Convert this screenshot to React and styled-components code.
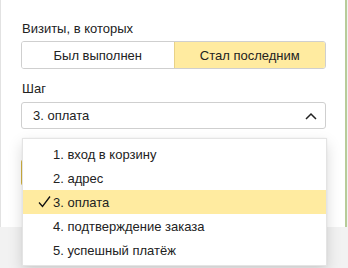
import React from "react";
import styled, { createGlobalStyle } from "styled-components";

const Global = createGlobalStyle`
  html, body { margin: 0; padding: 0; }
  body {
    background: #f2f2f2;
    font-family: "Liberation Sans", Arial, sans-serif;
    font-size: 13px;
    color: #222;
  }
`;

const Page = styled.div`
  display: flex;
  width: 348px;
  height: 268px;
  background: #f2f2f2;
`;

const Panel = styled.div`
  box-sizing: border-box;
  width: 347px;
  height: 227px;
  background: #fff;
  border-left: 1px solid #e2e2e2;
  border-right: 2px solid #b7cc9a;
  padding: 21px 20px 0 20px;
  display: flex;
  flex-direction: column;
`;

const Label = styled.div`
  font-size: 13px;
  line-height: 16px;
  color: #222;
  margin-bottom: ${(p) => p.$mb || 0}px;
  margin-left: 1px;
`;

const Segmented = styled.div`
  display: grid;
  grid-template-columns: 1fr 1fr;
  height: 28px;
  width: 305px;
  box-sizing: border-box;
  border: 1px solid #cfcfcf;
  border-radius: 3px;
  overflow: hidden;
  margin-bottom: 12px;
`;

const SegButton = styled.div`
  display: flex;
  align-items: center;
  justify-content: center;
  font-size: 13px;
  color: #222;
  background: ${(p) => (p.$active ? "#ffeba0" : "#fff")};
  border-left: ${(p) => (p.$active ? "1px solid #e8d288" : "none")};
`;

const SelectWrap = styled.div`
  position: relative;
  width: 305px;
`;

const Select = styled.div`
  box-sizing: border-box;
  height: 27px;
  border: 1px solid #cfcfcf;
  border-radius: 3px;
  display: flex;
  align-items: center;
  justify-content: space-between;
  padding: 0 8px 0 11px;
  font-size: 13px;
`;

const Chevron = styled.svg`
  width: 12px;
  height: 8px;
`;

const ApplyButton = styled.div`
  box-sizing: border-box;
  margin-top: 30px;
  height: 27px;
  width: 305px;
  border-radius: 3px;
  background: #ffdb4d;
  border: 1px solid #d6b540;
`;

const Menu = styled.div`
  position: absolute;
  top: 36px;
  left: 1px;
  width: 305px;
  box-sizing: border-box;
  background: #fff;
  border: 1px solid #e4e4e4;
  box-shadow: 0 6px 14px rgba(0, 0, 0, 0.15), 0 0 2px rgba(0, 0, 0, 0.05);
  padding: 3px 0;
  display: flex;
  flex-direction: column;
`;

const Item = styled.div`
  height: 24px;
  display: flex;
  align-items: center;
  padding-left: 30px;
  position: relative;
  font-size: 13px;
  color: #222;
  background: ${(p) => (p.$selected ? "#ffeba0" : "transparent")};
`;

const Check = styled.svg`
  position: absolute;
  left: 15px;
  top: 6px;
  width: 13px;
  height: 12px;
`;

const items = [
  "1. вход в корзину",
  "2. адрес",
  "3. оплата",
  "4. подтверждение заказа",
  "5. успешный платёж",
];

export default function App() {
  return (
    <>
      <Global />
      <Page>
        <Panel>
          <Label $mb={4}>Визиты, в которых</Label>
          <Segmented>
            <SegButton>Был выполнен</SegButton>
            <SegButton $active>Стал последним</SegButton>
          </Segmented>
          <Label $mb={5}>Шаг</Label>
          <SelectWrap>
            <Select>
              <span>3. оплата</span>
              <Chevron viewBox="0 0 12 8">
                <path d="M1 7 L6 2 L11 7" fill="none" stroke="#222" strokeWidth="1.5" />
              </Chevron>
            </Select>
            <ApplyButton />
            <Menu>
              {items.map((t, i) => (
                <Item key={t} $selected={i === 2}>
                  {i === 2 && (
                    <Check viewBox="0 0 13 12">
                      <path d="M1 6.5 L4.5 10.5 L12 0.5" fill="none" stroke="#111" strokeWidth="1.3" />
                    </Check>
                  )}
                  {t}
                </Item>
              ))}
            </Menu>
          </SelectWrap>
        </Panel>
      </Page>
    </>
  );
}
